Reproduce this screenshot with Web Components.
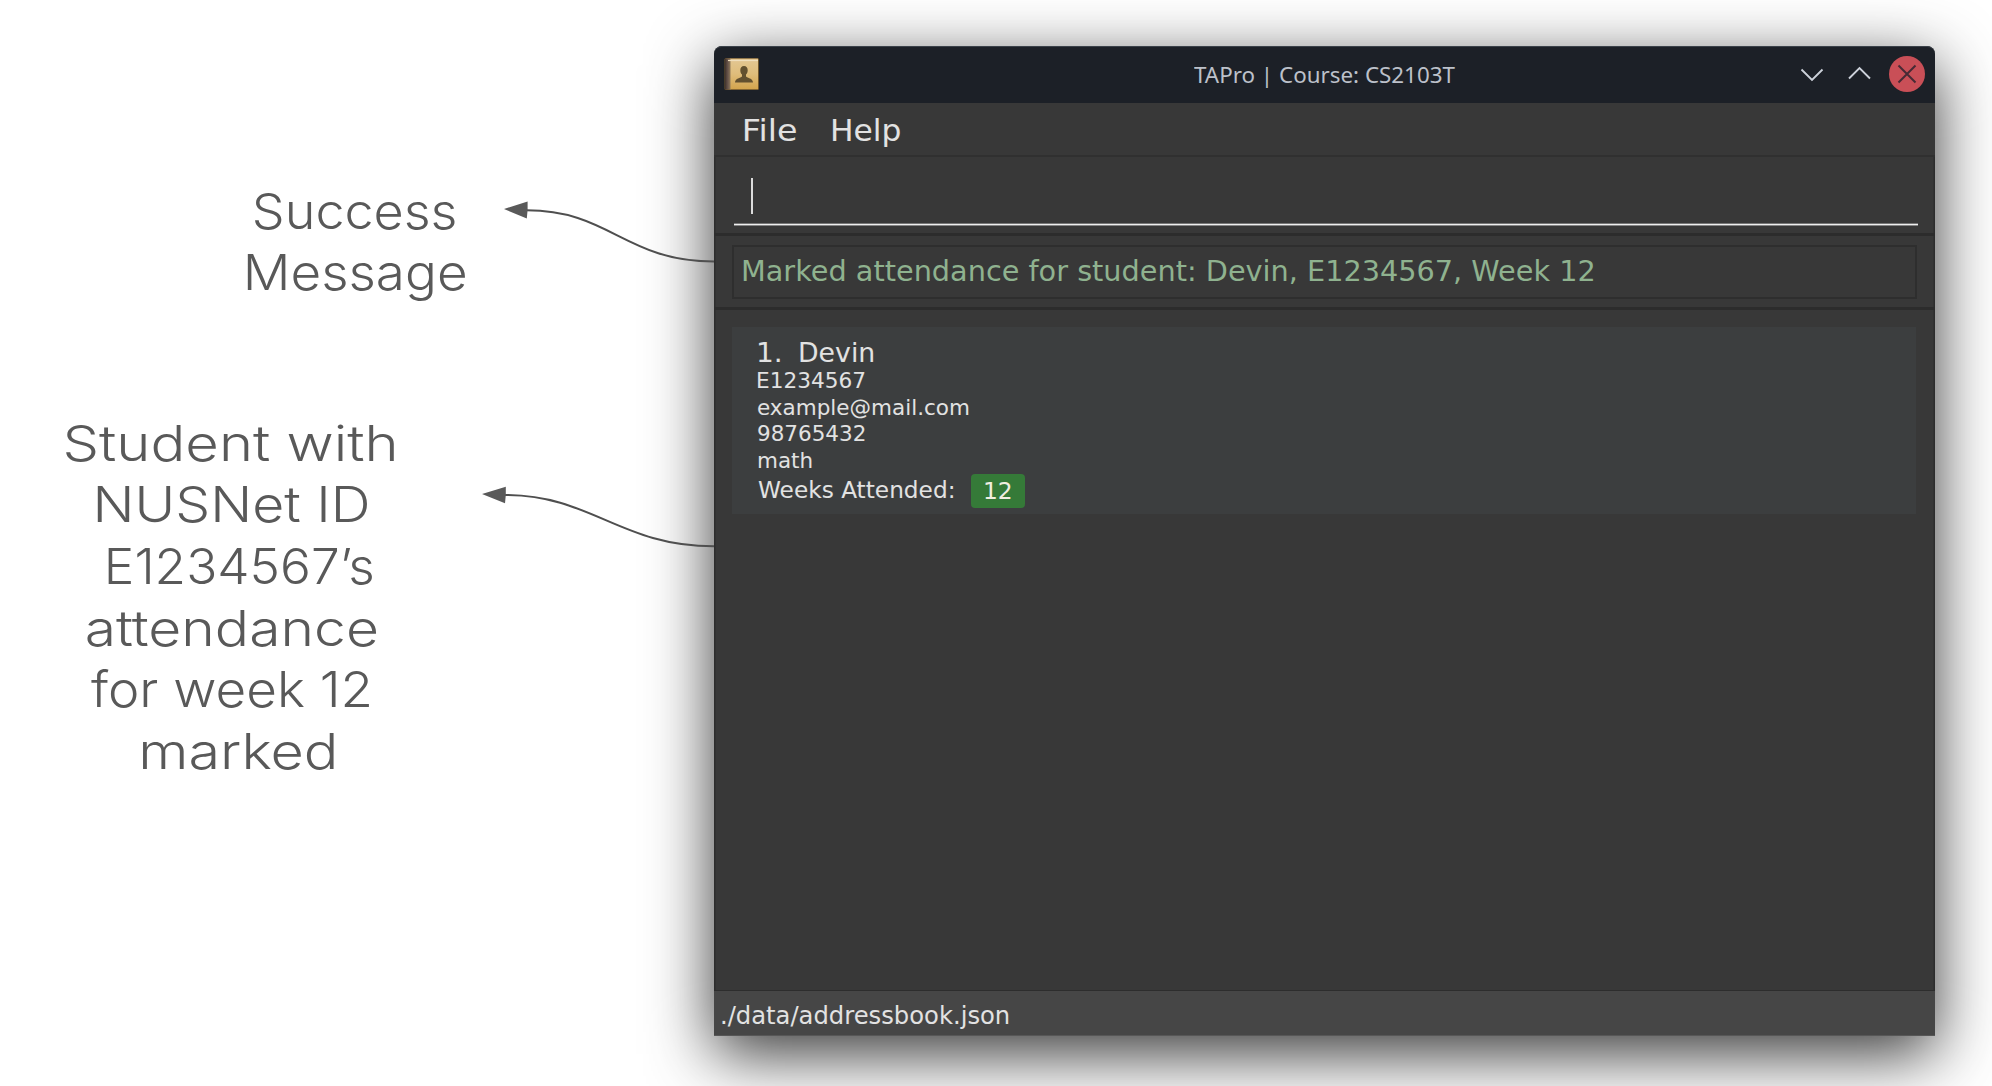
<!DOCTYPE html>
<html lang="en">
<head>
<meta charset="utf-8">
<title>TAPro</title>
<style>
html,body{margin:0;background:#fff;overflow:hidden}
body{width:1992px;height:1086px}
</style>
</head>
<body>
<tapro-guide></tapro-guide>
<script>
// Single line of text whose inked width is set by the "w" attribute.
class FitText extends HTMLElement{
  connectedCallback(){
    const root=this.attachShadow({mode:'open'});
    root.innerHTML=`<style>:host{display:block;flex:none;white-space:pre}span{display:inline-block;transform-origin:0 50%}</style><span></span>`;
    const s=root.querySelector('span');
    s.textContent=this.getAttribute('text');
    const w=+this.getAttribute('w');
    this.style.width=w+'px';
    const cs=getComputedStyle(this),c=document.createElement('canvas').getContext('2d');
    c.font=`${cs.fontWeight} ${cs.fontSize} ${cs.fontFamily}`;
    const m=c.measureText(s.textContent),k=w/(m.actualBoundingBoxLeft+m.actualBoundingBoxRight);
    s.style.transform=`translateX(${m.actualBoundingBoxLeft*k}px) scaleX(${k})`;
  }
}
customElements.define('fit-text',FitText);

class GuideNote extends HTMLElement{
  connectedCallback(){
    this.attachShadow({mode:'open'}).innerHTML=`<style>
    :host{display:flex;flex-direction:column;font:340 49.500px/61.600px Inter,"Open Sans",sans-serif;color:#595959}
    </style><slot></slot>`;
  }
}
customElements.define('guide-note',GuideNote);

class TitleBar extends HTMLElement{
  connectedCallback(){
    this.attachShadow({mode:'open'}).innerHTML=`<style>
    :host{display:grid;grid-template-columns:479.500px 1fr 157.500px;align-items:center;height:57px;box-sizing:border-box;padding-bottom:2px;background:#1c2027;border-top:1px solid #3b424a;border-radius:8px 8px 0 0;font:22px/30px "Noto Sans",sans-serif;color:#bcc1ca}
    .app{margin-left:10px;display:block}
    .btns{display:flex;align-items:center}
    svg{display:block}
    </style>
    <svg class="app" width="36" height="34" viewBox="0 0 36 34">
      <defs><linearGradient id="g" x1="0" y1="0" x2="0" y2="1"><stop offset="0" stop-color="#e3c793"/><stop offset=".5" stop-color="#dfbd7b"/><stop offset="1" stop-color="#d3a44d"/></linearGradient>
      <linearGradient id="s" x1="0" y1="0" x2="1" y2="0"><stop offset="0" stop-color="#40322c"/><stop offset=".5" stop-color="#69564c"/><stop offset="1" stop-color="#97805b"/></linearGradient></defs>
      <rect x=".5" y="1" width="34.500" height="32" rx="1.500" fill="#70562c"/>
      <rect x="1" y="1.500" width="6" height="31" fill="url(#s)"/>
      <rect x="6.500" y="1.700" width="27.500" height="30.500" fill="url(#g)"/>
      <path d="M4 3.500H34" stroke="#f0dfbd" stroke-width="1.200"/>
      <path d="M20 9c-2.400 0-3.700 1.700-3.700 4.200 0 1.900.6 3.400 1.700 4.400v1.800c-1.400 1.700-6.800 1.600-7 6h18c-.2-4.400-5.600-4.300-7-6v-1.800c1.100-1 1.700-2.500 1.700-4.400C23.700 10.700 22.400 9 20 9z" fill="#62502f"/>
    </svg>
    <fit-text w="260.700" text="TAPro | Course: CS2103T"></fit-text>
    <div class="btns">
      <svg width="147" height="38" viewBox="0 0 147 38" fill="none">
        <path d="M23.500 14.500 34 25 44.500 14.500M71 23.500 81.500 13 92 23.500" stroke="#ccd1da" stroke-width="1.900"/>
        <circle cx="129" cy="19" r="18" fill="#c94f57"/>
        <path d="M120.500 10.500l17 17m0-17l-17 17" stroke="#472a35" stroke-width="2"/>
      </svg>
    </div>`;
  }
}
customElements.define('title-bar',TitleBar);

class MenuStrip extends HTMLElement{
  connectedCallback(){
    this.attachShadow({mode:'open'}).innerHTML=`<style>
    :host{display:flex;gap:36.600px;height:52px;padding:0 30.800px;border-bottom:2px solid #303030;font-size:31px;line-height:55px}
    </style><fit-text w="51.400" text="File"></fit-text><fit-text w="66.700" text="Help"></fit-text>`;
  }
}
customElements.define('menu-strip',MenuStrip);

class CommandBox extends HTMLElement{
  connectedCallback(){
    this.attachShadow({mode:'open'}).innerHTML=`<style>
    :host{display:flex;flex-direction:column;height:76px;padding:0 17.500px 0 19.500px;border-bottom:3px solid #2c2c2c}
    i{width:2px;height:36px;margin:21px 0 9px 17.500px;background:#dcdcdc}
    hr{width:100%;height:3px;margin:0;border:0;background:linear-gradient(#777 1px,#eee 1px 2px,#858585 2px)}
    </style><i></i><hr>`;
  }
}
customElements.define('command-box',CommandBox);

class ResultBox extends HTMLElement{
  connectedCallback(){
    this.attachShadow({mode:'open'}).innerHTML=`<style>
    :host{display:block;height:61.500px;padding:9px 18px 0 18px;border-bottom:3px solid #2c2c2c}
    div{box-sizing:border-box;height:54px;border:2px solid #2e2e2e;padding-left:9px;font-size:28.500px;line-height:50px;color:#8fb28f}
    </style><div><fit-text w="850.600" text="Marked attendance for student: Devin, E1234567, Week 12"></fit-text></div>`;
  }
}
customElements.define('result-box',ResultBox);

class StudentCard extends HTMLElement{
  connectedCallback(){
    this.attachShadow({mode:'open'}).innerHTML=`<style>
    :host{display:flex;flex-direction:column;height:176.500px;margin:17.500px 19px 0 18px;padding:10.500px 0 0 26px;background:#3c3e3f;font-size:21.500px;line-height:26.500px}
    .n{display:flex;gap:20px;font-size:26.800px;line-height:29px;margin-bottom:1.700px}
    .w{display:flex;align-items:center;gap:17.500px;font-size:23px;line-height:35px;margin-top:-1px}
    .b{width:54px;height:34px;box-sizing:border-box;padding-left:13.500px;background:#357a38;border-radius:4px;color:#f0eee0}
    </style>
    <div class="n"><fit-text w="22" text="1."></fit-text><fit-text w="73.300" text="Devin"></fit-text></div>
    <fit-text w="106.300" text="E1234567"></fit-text>
    <fit-text w="211" text="example@mail.com"></fit-text>
    <fit-text w="106.700" text="98765432"></fit-text>
    <fit-text w="53.500" text="math"></fit-text>
    <div class="w"><fit-text w="195.700" text="Weeks Attended:"></fit-text><div class="b"><fit-text w="26" text="12"></fit-text></div></div>`;
  }
}
customElements.define('student-card',StudentCard);

class AppWindow extends HTMLElement{
  connectedCallback(){
    this.attachShadow({mode:'open'}).innerHTML=`<style>
    :host{display:flex;flex-direction:column;flex:none;box-sizing:border-box;width:1221px;height:990px;margin-top:46px;background:#383838;border-radius:8px 8px 0 0;box-shadow:0 18px 65px rgba(0,0,0,.79);font-family:"DejaVu Sans",sans-serif;color:#e2e2e2}
    .body{flex:1;display:flex;flex-direction:column;box-shadow:inset 1.500px 0 #2d2d2d,inset -1.500px 0 #2d2d2d}
    footer{height:45px;box-sizing:border-box;padding:0 8.300px;background:#464646;border-bottom:1px solid #575757;box-shadow:0 -1px #2d2d2d;font-size:24px;line-height:51px;overflow:hidden}
    </style>
    <title-bar></title-bar><menu-strip></menu-strip>
    <div class="body"><command-box></command-box><result-box></result-box><student-card></student-card></div>
    <footer><fit-text w="287" text="./data/addressbook.json"></fit-text></footer>`;
  }
}
customElements.define('app-window',AppWindow);

class TaproGuide extends HTMLElement{
  connectedCallback(){
    this.attachShadow({mode:'open'}).innerHTML=`<style>
    :host{display:flex;position:relative;width:1992px;height:1086px;overflow:hidden;background:#fff}
    .notes{width:714px;flex:none;display:flex;flex-direction:column;gap:109px;padding-top:180.700px;box-sizing:border-box}
    svg{position:absolute;left:0;top:0;pointer-events:none}
    </style>
    <div class="notes">
      <guide-note>
        <fit-text style="margin-left:255px" w="199.800" text="Success"></fit-text>
        <fit-text style="margin-left:247px" w="218.800" text="Message"></fit-text>
      </guide-note>
      <guide-note>
        <fit-text style="margin-left:66px" w="329" text="Student with"></fit-text>
        <fit-text style="margin-left:97px" w="270.700" text="NUSNet ID"></fit-text>
        <fit-text style="margin-left:107.800px" w="264" text="E1234567’s"></fit-text>
        <fit-text style="margin-left:86.500px" w="290" text="attendance"></fit-text>
        <fit-text style="margin-left:91.300px" w="278.500" text="for week 12"></fit-text>
        <fit-text style="margin-left:142.700px" w="191" text="marked"></fit-text>
      </guide-note>
    </div>
    <app-window></app-window>
    <svg width="714" height="1086" viewBox="0 0 714 1086" fill="none" stroke="#4f4f4f" stroke-width="2">
      <path d="M526 210.300C610 210 625 261.500 714 261.500M505 495C592 495 620 546.300 714 546.300"/>
      <path d="M504 209 527.600 201.500V210L526.800 218.500ZM482 494 505.800 486.700V495L505 503.300Z" fill="#595959" stroke="none"/>
    </svg>`;
  }
}
customElements.define('tapro-guide',TaproGuide);
</script>
</body>
</html>
